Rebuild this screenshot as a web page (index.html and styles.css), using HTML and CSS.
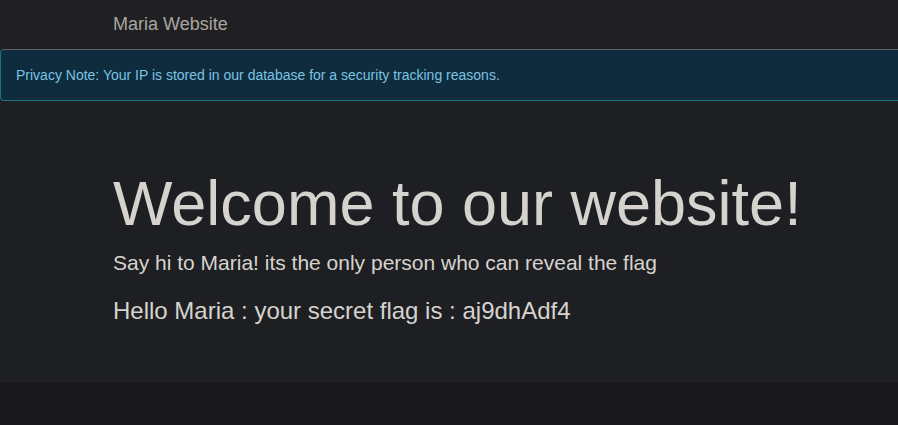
FILE: index.html
```html
<!DOCTYPE html>
<html lang="en">
<head>
<meta charset="utf-8">
<title>Maria Website</title>
<link rel="stylesheet" href="styles.css">
</head>
<body>
<nav class="navbar">
  <div class="container">
    <a class="brand" href="#">Maria Website</a>
  </div>
</nav>
<div class="alert">Privacy Note: Your IP is stored in our database for a security tracking reasons.</div>
<div class="jumbotron">
  <div class="container">
    <h1>Welcome to our website!</h1>
    <p class="lead">Say hi to Maria! its the only person who can reveal the flag</p>
    <h3 class="flag">Hello Maria : your secret flag is : aj9dhAdf4</h3>
  </div>
</div>
</body>
</html>
```

FILE: styles.css
```css
html, body {
  margin: 0;
  padding: 0;
  overflow: hidden;
}
body {
  background: #18181b;
  font-family: "Liberation Sans", Arial, sans-serif;
  font-size: 14px;
  line-height: 1.42857;
  color: #d5d2cd;
}
.container {
  padding-left: 113px;
}
.navbar {
  height: 49px;
  background: #202024;
}
.brand {
  display: block;
  padding: 14px 0 15px;
  font-size: 18px;
  line-height: 20px;
  color: #aaa59d;
  text-decoration: none;
}
.alert {
  width: calc(100% + 10px);
  box-sizing: border-box;
  padding: 15px;
  background: #0e2c3e;
  border: 1px solid #1a7286;
  border-top-color: #5f6264;
  border-radius: 4px;
  color: #7cc3e2;
  font-size: 14px;
  line-height: 20px;
}
.jumbotron {
  background: #1e1f23;
  padding: 48px 0;
}
.jumbotron h1 {
  margin: 20px 0 10px;
  font-size: 63px;
  font-weight: 400;
  line-height: 1.1;
  color: #d6d3ce;
}
.lead {
  margin: 0 0 15px;
  font-size: 21px;
  line-height: 30px;
  color: #d6d3ce;
}
.flag {
  margin: 20px 0 10px;
  font-size: 24px;
  font-weight: 400;
  line-height: 1.1;
  color: #d6d3ce;
}
```
